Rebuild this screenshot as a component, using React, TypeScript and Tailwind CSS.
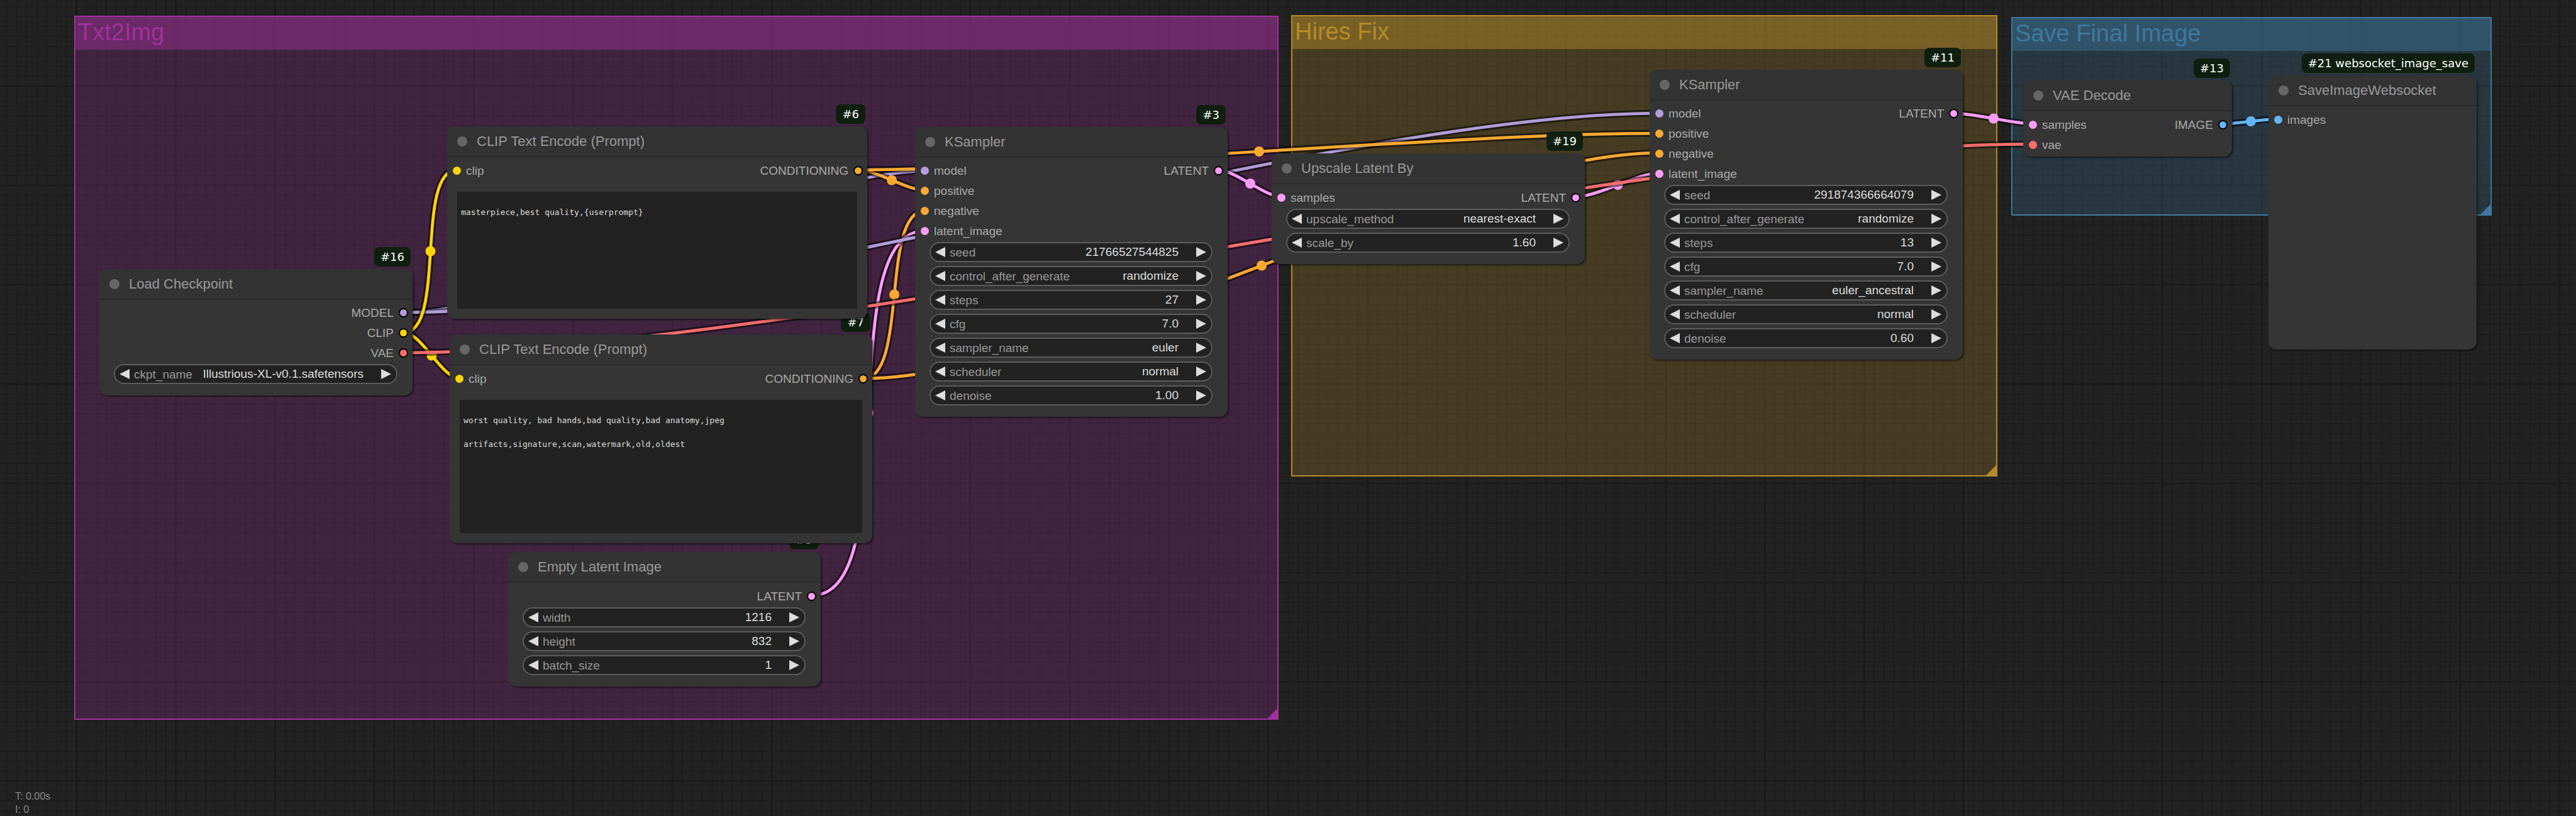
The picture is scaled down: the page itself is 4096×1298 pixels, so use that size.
import React from "react";

type Kind = "MODEL" | "CLIP" | "VAE" | "CONDITIONING" | "LATENT" | "IMAGE";

type Port = { label: string; kind: Kind };

type Widget = {
  name: string;
  value: string;
  type: "number" | "combo";
};

type GraphNode = {
  id: number;
  title: string;
  badge: string;
  place: string;
  slotsHeight: string;
  inputs: Port[];
  outputs: Port[];
  widgets?: Widget[];
  prompt?: { text: string; height: string };
  foot: string;
};

const dotColor: Record<Kind, string> = {
  MODEL: "bg-[#b39ddb]",
  CLIP: "bg-[#ffd500]",
  VAE: "bg-[#ff6e6e]",
  CONDITIONING: "bg-[#ffa931]",
  LATENT: "bg-[#ff9cf9]",
  IMAGE: "bg-[#64b5f6]",
};

const strokeColor: Record<Kind, string> = {
  MODEL: "#b39ddb",
  CLIP: "#ffd500",
  VAE: "#ff6e6e",
  CONDITIONING: "#ffa931",
  LATENT: "#ff9cf9",
  IMAGE: "#64b5f6",
};

const samplerInputs: Port[] = [
  { label: "model", kind: "MODEL" },
  { label: "positive", kind: "CONDITIONING" },
  { label: "negative", kind: "CONDITIONING" },
  { label: "latent_image", kind: "LATENT" },
];

/* Listed back to front: later nodes are painted over earlier ones. */
const nodes: GraphNode[] = [
  {
    id: 5,
    title: "Empty Latent Image",
    badge: "#5",
    place: "left-[808px] top-[878px] w-[497px]",
    slotsHeight: "h-[32px]",
    inputs: [],
    outputs: [{ label: "LATENT", kind: "LATENT" }],
    widgets: [
      { name: "width", value: "1216", type: "number" },
      { name: "height", value: "832", type: "number" },
      { name: "batch_size", value: "1", type: "number" },
    ],
    foot: "pb-[18px]",
  },
  {
    id: 7,
    title: "CLIP Text Encode (Prompt)",
    badge: "#7",
    place: "left-[715px] top-[532px] w-[672px]",
    slotsHeight: "h-[32px]",
    inputs: [{ label: "clip", kind: "CLIP" }],
    outputs: [{ label: "CONDITIONING", kind: "CONDITIONING" }],
    prompt: {
      text: "worst quality, bad hands,bad quality,bad anatomy,jpeg\nartifacts,signature,scan,watermark,old,oldest",
      height: "h-[212px]",
    },
    foot: "pb-4",
  },
  {
    id: 6,
    title: "CLIP Text Encode (Prompt)",
    badge: "#6",
    place: "left-[711px] top-[201px] w-[668px]",
    slotsHeight: "h-[32px]",
    inputs: [{ label: "clip", kind: "CLIP" }],
    outputs: [{ label: "CONDITIONING", kind: "CONDITIONING" }],
    prompt: {
      text: "masterpiece,best quality,{userprompt}",
      height: "h-[186px]",
    },
    foot: "pb-4",
  },
  {
    id: 16,
    title: "Load Checkpoint",
    badge: "#16",
    place: "left-[158px] top-[428px] w-[498px]",
    slotsHeight: "h-[95px]",
    inputs: [],
    outputs: [
      { label: "MODEL", kind: "MODEL" },
      { label: "CLIP", kind: "CLIP" },
      { label: "VAE", kind: "VAE" },
    ],
    widgets: [
      {
        name: "ckpt_name",
        value: "Illustrious-XL-v0.1.safetensors",
        type: "combo",
      },
    ],
    foot: "pb-[18px]",
  },
  {
    id: 3,
    title: "KSampler",
    badge: "#3",
    place: "left-[1455px] top-[202px] w-[497px]",
    slotsHeight: "h-[127px]",
    inputs: samplerInputs,
    outputs: [{ label: "LATENT", kind: "LATENT" }],
    widgets: [
      { name: "seed", value: "21766527544825", type: "number" },
      { name: "control_after_generate", value: "randomize", type: "combo" },
      { name: "steps", value: "27", type: "number" },
      { name: "cfg", value: "7.0", type: "number" },
      { name: "sampler_name", value: "euler", type: "combo" },
      { name: "scheduler", value: "normal", type: "combo" },
      { name: "denoise", value: "1.00", type: "number" },
    ],
    foot: "pb-[18px]",
  },
  {
    id: 19,
    title: "Upscale Latent By",
    badge: "#19",
    place: "left-[2022px] top-[244px] w-[498px]",
    slotsHeight: "h-[32px]",
    inputs: [{ label: "samples", kind: "LATENT" }],
    outputs: [{ label: "LATENT", kind: "LATENT" }],
    widgets: [
      { name: "upscale_method", value: "nearest-exact", type: "combo" },
      { name: "scale_by", value: "1.60", type: "number" },
    ],
    foot: "pb-[18px]",
  },
  {
    id: 11,
    title: "KSampler",
    badge: "#11",
    place: "left-[2623px] top-[111px] w-[498px]",
    slotsHeight: "h-[127px]",
    inputs: samplerInputs,
    outputs: [{ label: "LATENT", kind: "LATENT" }],
    widgets: [
      { name: "seed", value: "291874366664079", type: "number" },
      { name: "control_after_generate", value: "randomize", type: "combo" },
      { name: "steps", value: "13", type: "number" },
      { name: "cfg", value: "7.0", type: "number" },
      { name: "sampler_name", value: "euler_ancestral", type: "combo" },
      { name: "scheduler", value: "normal", type: "combo" },
      { name: "denoise", value: "0.60", type: "number" },
    ],
    foot: "pb-[18px]",
  },
  {
    id: 13,
    title: "VAE Decode",
    badge: "#13",
    place: "left-[3217px] top-[128px] w-[332px]",
    slotsHeight: "h-[64px]",
    inputs: [
      { label: "samples", kind: "LATENT" },
      { label: "vae", kind: "VAE" },
    ],
    outputs: [{ label: "IMAGE", kind: "IMAGE" }],
    foot: "pb-[3px]",
  },
  {
    id: 21,
    title: "SaveImageWebsocket",
    badge: "#21 websocket_image_save",
    place: "left-[3607px] top-[120px] w-[331px]",
    slotsHeight: "h-[32px]",
    inputs: [{ label: "images", kind: "IMAGE" }],
    outputs: [],
    foot: "pb-[350px]",
  },
];

type Link = { kind: Kind; from: [number, number]; to: [number, number] };

/* Painted in this order, each one with a dark halo under it. */
const links: Link[] = [
  { kind: "MODEL", from: [642, 497], to: [1471, 272] },
  { kind: "CONDITIONING", from: [1365, 270], to: [1471, 303] },
  { kind: "CONDITIONING", from: [1373, 602], to: [1471, 335] },
  { kind: "LATENT", from: [1291, 947], to: [1471, 367] },
  { kind: "MODEL", from: [642, 497], to: [2639, 180] },
  { kind: "CONDITIONING", from: [1365, 270], to: [2639, 212] },
  { kind: "CONDITIONING", from: [1373, 602], to: [2639, 243] },
  { kind: "LATENT", from: [2506, 313], to: [2639, 275] },
  { kind: "CLIP", from: [642, 529], to: [727, 270] },
  { kind: "CLIP", from: [642, 529], to: [731, 602] },
  { kind: "LATENT", from: [1938, 271], to: [2038, 313] },
  { kind: "LATENT", from: [3107, 180], to: [3233, 197] },
  { kind: "VAE", from: [642, 561], to: [3233, 229] },
  { kind: "IMAGE", from: [3535, 197], to: [3623, 189] },
];

function linkPath({ from, to }: Link) {
  const pull = Math.hypot(to[0] - from[0], to[1] - from[1]) / 4;
  return `M${from[0]} ${from[1]} C${from[0] + pull} ${from[1]} ${to[0] - pull} ${to[1]} ${to[0]} ${to[1]}`;
}

function Links() {
  return (
    <svg className="pointer-events-none absolute inset-0 h-full w-full" fill="none" aria-hidden="true">
      {links.map((link, i) => {
        const d = linkPath(link);
        const color = strokeColor[link.kind];
        return (
          <g key={i}>
            <path d={d} stroke="#000" strokeOpacity="0.5" strokeWidth="11" />
            <path d={d} stroke={color} strokeWidth="4.75" />
            <circle
              cx={(link.from[0] + link.to[0]) / 2}
              cy={(link.from[1] + link.to[1]) / 2}
              r="8"
              fill={color}
            />
          </g>
        );
      })}
    </svg>
  );
}

const CELL = 15.793;

function gridPath(major: boolean) {
  let d = "";
  for (let i = -10; i < 270; i++) {
    const isMajor = ((i % 10) + 10) % 10 === 0;
    if (isMajor !== major) continue;
    d += `M${(121.6 + i * CELL).toFixed(2)} 0V1400`;
  }
  for (let i = -10; i < 90; i++) {
    const isMajor = ((i % 10) + 10) % 10 === 0;
    if (isMajor !== major) continue;
    d += `M0 ${(137 + i * CELL).toFixed(2)}H4200`;
  }
  return d;
}

function Grid() {
  return (
    <svg className="pointer-events-none absolute inset-0 h-full w-full" fill="none" aria-hidden="true">
      <path d={gridPath(false)} stroke="#1d1d1d" strokeWidth="1.6" />
      <path d={gridPath(true)} stroke="#1b1b1b" strokeWidth="3" />
    </svg>
  );
}

function Group({
  title,
  place,
  frame,
  band,
  corner,
}: {
  title: string;
  place: string;
  frame: string;
  band: string;
  corner: string;
}) {
  return (
    <section className={`absolute border-2 ${place} ${frame}`}>
      <h2 className={`h-[52px] pl-1 text-[38px] leading-[48px] ${band}`}>{title}</h2>
      <svg className={`absolute right-0 bottom-0 size-4 ${corner}`} viewBox="0 0 16 16" aria-hidden="true">
        <path d="M16 0V16H0Z" fill="currentColor" />
      </svg>
    </section>
  );
}

function Arrow({ side, label }: { side: "left" | "right"; label: string }) {
  return (
    <button type="button" aria-label={label} className="size-4 shrink-0 text-[#ddd]">
      <svg viewBox="0 0 16 16" className="size-4" aria-hidden="true">
        <path d={side === "left" ? "M16 0V16L0 8Z" : "M0 0V16L16 8Z"} fill="currentColor" />
      </svg>
    </button>
  );
}

function WidgetRow({ widget, nodeId }: { widget: Widget; nodeId: number }) {
  const id = `n${nodeId}-${widget.name}`;
  return (
    <div className="flex h-8 items-center rounded-full border-2 border-[#5c5c5c] bg-[#222] pr-2 pl-[7px]">
      <Arrow side="left" label={`Previous ${widget.name}`} />
      <label htmlFor={id} className="pl-[7px] text-[#999]">
        {widget.name}
      </label>
      {widget.type === "number" ? (
        <input
          id={id}
          type="text"
          inputMode="decimal"
          defaultValue={widget.value}
          className="h-7 w-0 min-w-0 flex-1 bg-transparent text-right leading-7 text-[#ddd] outline-none"
        />
      ) : (
        <select
          id={id}
          defaultValue={widget.value}
          className="h-7 w-0 min-w-0 flex-1 appearance-none bg-transparent text-right leading-7 text-[#ddd] outline-none [text-align-last:right]"
        >
          <option>{widget.value}</option>
        </select>
      )}
      <span className="w-7 shrink-0" />
      <Arrow side="right" label={`Next ${widget.name}`} />
    </div>
  );
}

function NodeCard({ node }: { node: GraphNode }) {
  const rows = Math.max(node.inputs.length, node.outputs.length);
  return (
    <section className={`absolute ${node.place}`}>
      <div className="absolute right-[3px] bottom-full mb-1 flex h-[31px] items-center rounded-lg bg-[#0f1f0f] px-2.5 font-['DejaVu_Sans',sans-serif] text-[18px] leading-none whitespace-nowrap text-white">
        {node.badge}
      </div>
      <div className={`rounded-[13px] bg-[#353535] shadow-[2px_2px_3px_rgba(0,0,0,0.5)] ${node.foot}`}>
        <header className="flex h-[49px] items-center gap-[15px] rounded-t-[13px] border-b-2 border-[#2c2c2c] bg-[#333] pl-4">
          <span className="size-4 rounded-full bg-[#666]" />
          <h3 className="text-[22px] text-[#999]">{node.title}</h3>
        </header>
        <div className={`mt-[5px] grid auto-rows-fr ${node.slotsHeight}`}>
          {Array.from({ length: rows }, (_, i) => {
            const input = node.inputs[i];
            const output = node.outputs[i];
            return (
              <div key={i} className="flex items-center pr-[7px] pl-[9px] text-[#aaa]">
                {input && (
                  <span className="flex items-center gap-2">
                    <span className={`size-[13px] rounded-full ${dotColor[input.kind]}`} />
                    {input.label}
                  </span>
                )}
                {output && (
                  <span className="ml-auto flex items-center gap-2">
                    {output.label}
                    <span className={`size-[15px] rounded-full border-2 border-black ${dotColor[output.kind]}`} />
                  </span>
                )}
              </div>
            );
          })}
        </div>
        {node.widgets && (
          <div className="mt-0.5 flex flex-col gap-1.5 pr-6 pl-[23px]">
            {node.widgets.map((widget) => (
              <WidgetRow key={widget.name} widget={widget} nodeId={node.id} />
            ))}
          </div>
        )}
        {node.prompt && (
          <div className="mt-[18px] flex px-4">
            <textarea
              aria-label={`${node.title} ${node.badge}`}
              defaultValue={node.prompt.text}
              spellCheck={false}
              className={`w-full resize-none overflow-hidden bg-[#222] px-1.5 pt-3.5 font-['DejaVu_Sans_Mono',monospace] text-[13px] leading-[38px] text-[#ddd] outline-none ${node.prompt.height}`}
            />
          </div>
        )}
      </div>
    </section>
  );
}

export default function App() {
  return (
    <main className="relative h-screen w-full overflow-hidden bg-[#222] font-['Liberation_Sans',Arial,sans-serif] text-[19px] leading-none">
      <Grid />
      <Group
        title="Txt2Img"
        place="left-[118px] top-[25px] w-[1915px] h-[1120px]"
        frame="border-[#a1309b] bg-[#a1309b]/25"
        band="bg-[#a1309b]/45 text-[#a1309b]"
        corner="text-[#a1309b]"
      />
      <Group
        title="Hires Fix"
        place="left-[2053px] top-[24px] w-[1123px] h-[734px]"
        frame="border-[#b58b2a] bg-[#b58b2a]/25"
        band="bg-[#b58b2a]/45 text-[#b58b2a]"
        corner="text-[#b58b2a]"
      />
      <Group
        title="Save Final Image"
        place="left-[3198px] top-[27px] w-[764px] h-[316px]"
        frame="border-[#3f789e] bg-[#3f789e]/25"
        band="bg-[#3f789e]/45 text-[#3f789e]"
        corner="text-[#3f789e]"
      />
      <Links />
      {nodes.map((node) => (
        <NodeCard key={node.id} node={node} />
      ))}
      <div className="absolute bottom-0 left-6 text-[16px] leading-[21px] text-[#888]">
        <p>T: 0.00s</p>
        <p>I: 0</p>
      </div>
    </main>
  );
}
